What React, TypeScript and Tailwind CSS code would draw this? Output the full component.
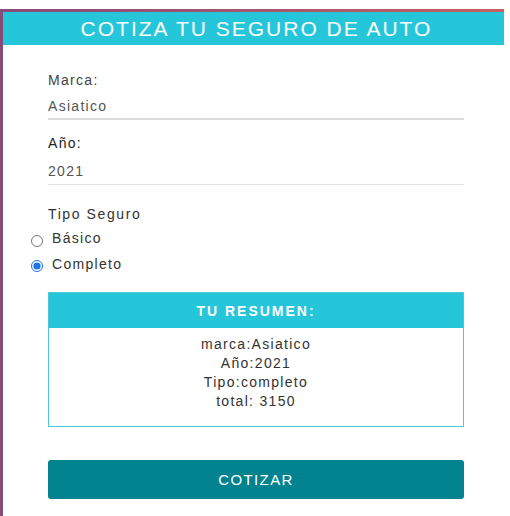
const resumen = {
  marca: "Asiatico",
  year: "2021",
  plan: "completo",
  total: 3150,
};

export default function App() {
  return (
    <div className="h-[516px] w-[510px] overflow-hidden bg-white pt-[9px] font-['Liberation_Sans',Arial,sans-serif]">
      <div className="h-[507px] w-[504px] bg-linear-to-r from-[#874b79] to-[#c4615c] pl-[3px] pt-[3px]">
        <div className="h-full bg-white">
          <header className="flex h-[33px] items-center justify-center bg-[#26c6da] pl-[6px]">
            <h1 className="text-[21px] leading-none tracking-[2px] text-white">
              COTIZA TU SEGURO DE AUTO
            </h1>
          </header>

          <form className="ml-[45px] w-[416px] pt-[25px] text-[14px] leading-[20px] tracking-[1.3px]">
            <label className="block text-[#444]">Marca:</label>
            <div className="mt-[6px] border-b-2 border-[#dcdcdc] pb-[2px] text-[#555]">
              {resumen.marca}
            </div>

            <label className="mt-[13px] block text-[#222]">Año:</label>
            <div className="mt-[8px] border-b border-[#e2e2e2] pb-[3px] text-[#555]">
              {resumen.year}
            </div>

            <p className="mt-[19px] tracking-[1.6px] text-[#333]">Tipo Seguro</p>
            <label className="ml-[-17px] mt-[4px] flex h-[20px] items-center gap-[9px] text-[#333]">
              <input type="radio" name="plan" className="m-0 mt-[5px] h-[12px] w-[12px]" />
              Básico
            </label>
            <label className="ml-[-17px] mt-[6px] flex h-[20px] items-center gap-[9px] text-[#333]">
              <input
                type="radio"
                name="plan"
                defaultChecked
                className="m-0 mt-[4px] h-[12px] w-[12px] accent-[#1a73e8]"
              />
              Completo
            </label>

            <div className="mt-[18px] border border-[#4cc8d8]">
              <div className="flex h-[35px] items-center justify-center bg-[#26c6da] text-[14px] font-bold tracking-[2px] text-white">
                TU RESUMEN:
              </div>
              <div className="pb-[15px] pt-[7px] text-center leading-[19px] text-[#333]">
                <p>marca:{resumen.marca}</p>
                <p>Año:{resumen.year}</p>
                <p>Tipo:{resumen.plan}</p>
                <p>total: {resumen.total}</p>
              </div>
            </div>

            <button
              type="button"
              className="mt-[33px] flex h-[39px] w-full items-center justify-center rounded-[3px] bg-[#00838f] text-[15px] tracking-[1.4px] text-white"
            >
              COTIZAR
            </button>
          </form>
        </div>
      </div>
    </div>
  );
}
